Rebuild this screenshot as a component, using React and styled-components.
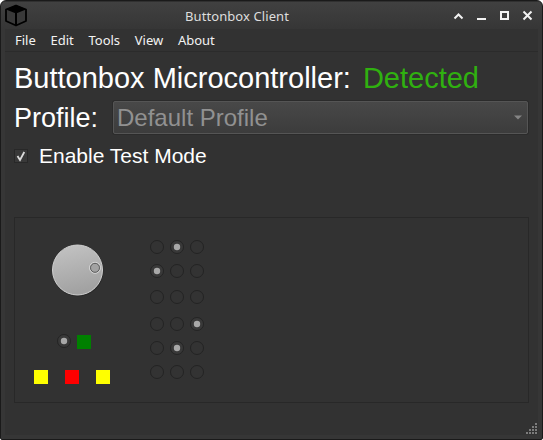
import React from "react";
import styled, { createGlobalStyle } from "styled-components";

const GlobalStyle = createGlobalStyle`
  *, *::before, *::after { box-sizing: border-box; }
  body { margin: 0; background: #fff; overflow: hidden; }
`;

const Window = styled.div`
  width: 543px;
  height: 440px;
  display: flex;
  flex-direction: column;
  border: 1px solid #1a1a1a;
  border-radius: 6px 6px 2px 2px;
  background: linear-gradient(#414141, #363636 28px, #363636);
  color: #fff;
  font-family: "Liberation Sans", Arial, sans-serif;
  overflow: hidden;
`;

const TitleBar = styled.header`
  height: 28px;
  flex: none;
  display: grid;
  grid-template-columns: 38px 1fr 100px;
  align-items: center;
  border-top: 1px solid #303030;
  font: 13px/20px "Noto Sans", sans-serif;
  color: #dedede;
`;

const Logo = styled.svg`
  width: 24px;
  height: 24px;
  margin: 0 0 3px 3px;
`;

const Title = styled.div`
  text-align: center;
  white-space: nowrap;
  padding: 0 7px 0 0;
  letter-spacing: 0.08px;
`;

const WindowControls = styled.svg`
  width: 100px;
  height: 28px;
`;

const Client = styled.main`
  flex: 1;
  margin: 0 4px 4px;
  background: #323232;
  display: flex;
  flex-direction: column;
`;

const MenuBar = styled.nav`
  height: 23px;
  flex: none;
  display: flex;
  gap: 14.7px;
  padding-left: 10px;
  border-bottom: 1px solid #2b2b2b;
  font: 13px/23px "Noto Sans", sans-serif;
  color: #f2f2f2;
`;

const MenuItem = styled.span`
  white-space: nowrap;
`;

const Content = styled.section`
  display: flex;
  flex-direction: column;
  padding: 9px 9px 0;
`;

const StatusRow = styled.div`
  display: flex;
  height: 34px;
  gap: 12px;
  font-size: 29px;
  line-height: 34px;
  white-space: nowrap;
`;

const StatusValue = styled.span`
  color: #30b010;
`;

const ProfileRow = styled.div`
  display: flex;
  align-items: center;
  height: 36px;
  margin-top: 4px;
`;

const Label = styled.label`
  width: 99px;
  padding-top: 2px;
  font-size: 27px;
  line-height: 34px;
`;

const Select = styled.div`
  flex: 1;
  height: 33px;
  margin-right: 1px;
  display: flex;
  align-items: center;
  justify-content: space-between;
  padding: 0 5px 0 3px;
  border: 1px solid #555;
  border-radius: 2px;
  background: linear-gradient(#484848, #3c3c3c);
  box-shadow: 0 0 0 1px #2b2b2b;
  color: #919191;
  font-size: 24px;
  line-height: 31px;
`;

const Arrow = styled.svg`
  width: 8px;
  height: 5px;
`;

const CheckRow = styled.div`
  display: flex;
  align-items: center;
  height: 28px;
  margin-top: 7px;
  gap: 11px;
  font-size: 21px;
  line-height: 26px;
`;

const CheckBox = styled.svg`
  width: 14px;
  height: 14px;
`;

const Panel = styled.section`
  height: 186px;
  margin-top: 47px;
  border: 1px solid #282828;
  display: grid;
  grid-template-columns: 135px 1fr;
`;

const Controls = styled.div`
  display: flex;
  flex-direction: column;
`;

const Knob = styled.svg`
  width: 56px;
  height: 56px;
  margin: 24px 0 0 34px;
`;

const ToggleRow = styled.div`
  display: flex;
  align-items: flex-start;
  gap: 6px;
  margin: 36px 0 0 42px;
`;

const LampRow = styled.div`
  display: flex;
  gap: 17px;
  margin: 21px 0 0 19px;
`;

const Lamp = styled.span`
  width: 14px;
  height: 14px;
  margin-top: ${(p) => p.$drop || 0}px;
  background: ${(p) => p.$color};
`;

const Matrix = styled.div`
  display: flex;
  flex-direction: column;
  padding-top: 22px;
`;

const MatrixRow = styled.div`
  display: flex;
  gap: 6px;
  margin-top: ${(p) => p.$space}px;
`;

const RadioIcon = styled.svg`
  width: 14px;
  height: 14px;
  flex: none;
  display: block;
`;

const StatusBar = styled.footer`
  margin-top: auto;
  display: flex;
  justify-content: flex-end;
  padding: 0 1px 1px 0;
`;

const Grip = styled.svg`
  width: 11px;
  height: 11px;
`;

const menus = ["File", "Edit", "Tools", "View", "About"];

const matrixRows = [
  { space: 0, selected: 1 },
  { space: 10, selected: 0 },
  { space: 12, selected: -1 },
  { space: 13, selected: 2 },
  { space: 10, selected: 1 },
  { space: 10, selected: -1 },
];

const gripDots = [[9, 0], [6, 3], [9, 3], [3, 6], [6, 6], [9, 6], [0, 9], [3, 9], [6, 9], [9, 9]];

function Radio({ checked }) {
  return (
    <RadioIcon viewBox="0 0 14 14">
      <circle cx="7" cy="7" r="6.5" fill={checked ? "#393939" : "#333"} stroke="#242424" />
      {checked && <circle cx="7" cy="7" r="3.2" fill="#a8a8a8" />}
    </RadioIcon>
  );
}

export default function App() {
  return (
    <>
      <GlobalStyle />
      <Window>
        <TitleBar>
          <Logo viewBox="0 0 24 24">
            <path d="M12 2.500 22 6.500v11.500L12 22.500 2 18v-11.500Z" fill="#393939" stroke="#000" strokeWidth="1.8" strokeLinejoin="round" />
            <path d="M12 2 22 6.500 12 10.500 2 6.500Z" fill="#000" />
            <path d="M12 9v14" stroke="#000" strokeWidth="2" />
          </Logo>
          <Title>Buttonbox Client</Title>
          <WindowControls viewBox="0 0 100 28" fill="none" stroke="#f2f2f2" strokeWidth="2">
            <path d="m12.500 16.500 4-4 4 4" />
            <path d="M35 17h9" />
            <path d="M59 10h7v7h-7Z" />
            <path d="m81.500 9.500 8 8m0-8-8 8" />
          </WindowControls>
        </TitleBar>
        <Client>
          <MenuBar>
            {menus.map((m) => <MenuItem key={m}>{m}</MenuItem>)}
          </MenuBar>
          <Content>
            <StatusRow>
              <span>Buttonbox Microcontroller:</span>
              <StatusValue>Detected</StatusValue>
            </StatusRow>
            <ProfileRow>
              <Label>Profile:</Label>
              <Select>
                <span>Default Profile</span>
                <Arrow viewBox="0 0 8 5"><path d="M0 .5h8L4 4.500Z" fill="#858585" /></Arrow>
              </Select>
            </ProfileRow>
            <CheckRow>
              <CheckBox viewBox="0 0 14 14">
                <rect x=".5" y=".5" width="13" height="13" fill="#393939" stroke="#282828" />
                <path d="m3.500 7 2.500 4L10.300 3" fill="none" stroke="#dadada" strokeWidth="1.8" />
              </CheckBox>
              <span>Enable Test Mode</span>
            </CheckRow>
            <Panel>
              <Controls>
                <Knob viewBox="0 0 56 56">
                  <defs>
                    <linearGradient id="knobFace" x1="0" y1="0" x2=".25" y2="1">
                      <stop offset="0" stopColor="#c4c4c4" />
                      <stop offset="1" stopColor="#a2a2a2" />
                    </linearGradient>
                  </defs>
                  <circle cx="29" cy="29" r="25.500" fill="#292929" />
                  <circle cx="28.500" cy="28" r="25" fill="url(#knobFace)" stroke="#d0d0d0" />
                  <circle cx="46" cy="25.800" r="5.500" fill="none" stroke="#d8d8d8" />
                  <circle cx="46" cy="25.800" r="4.500" fill="#a2a2a2" stroke="#5c5c5c" />
                </Knob>
                <ToggleRow>
                  <Radio checked />
                  <Lamp $color="#008000" $drop={1} />
                </ToggleRow>
                <LampRow>
                  <Lamp $color="#ff0" />
                  <Lamp $color="#f00" />
                  <Lamp $color="#ff0" />
                </LampRow>
              </Controls>
              <Matrix>
                {matrixRows.map((row, i) => (
                  <MatrixRow key={i} $space={row.space}>
                    {[0, 1, 2].map((c) => <Radio key={c} checked={row.selected === c} />)}
                  </MatrixRow>
                ))}
              </Matrix>
            </Panel>
          </Content>
          <StatusBar>
            <Grip viewBox="0 0 11 11">
              {gripDots.map(([x, y]) => <rect key={`${x}-${y}`} x={x} y={y} width="2" height="2" fill="#7c7c7c" />)}
            </Grip>
          </StatusBar>
        </Client>
      </Window>
    </>
  );
}
